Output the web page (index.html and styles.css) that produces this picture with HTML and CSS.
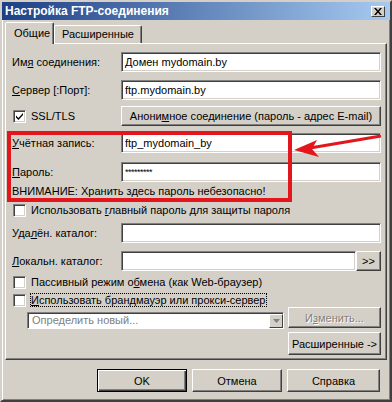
FILE: index.html
```html
<!DOCTYPE html>
<html lang="ru">
<head>
	<meta charset="utf-8"/>
	<title>Настройка FTP-соединения</title>
	<link rel="stylesheet" href="styles.css">
</head>
<body>
	<div class="window">
		<div class="titlebar">
			<span class="title">Настройка FTP-соединения</span>
			<span class="close">
				<svg width="8" height="7" viewBox="0 0 8 7"><path d="M0 0h2l2 2.5L6 0h2L5 3.5 8 7H6L4 4.5 2 7H0l3-3.5z" fill="#000"/></svg>
			</span>
		</div>

		<div class="tabs">
			<span class="tab active">Общие</span>
			<span class="tab">Расширенные</span>
		</div>

		<div class="panel">
			<div class="row first">
				<span class="lbl">Им<u>я</u> соединения:</span>
				<span class="field">Домен mydomain.by</span>
			</div>
			<div class="row">
				<span class="lbl"><u>С</u>ервер [:Порт]:</span>
				<span class="field">ftp.mydomain.by</span>
			</div>
			<div class="row gap6">
				<span class="lbl check-row"><span class="check"><svg width="7" height="7" viewBox="0 0 7 7"><path d="M0 2.5l2.5 2.5L7 0v2L2.5 7 0 4.5z" fill="#000"/></svg></span><span>SSL/TLS</span></span>
				<span class="btn fill"><span>Анони<u>м</u>ное соединение (пароль - адрес E-mail)</span></span>
			</div>
			<div class="row gap7">
				<span class="lbl"><u>У</u>чётная запись:</span>
				<span class="field">ftp_mydomain_by</span>
			</div>
			<div class="row gap9">
				<span class="lbl"><u>П</u>ароль:</span>
				<span class="field"><span class="stars">*********</span></span>
			</div>
			<div class="note">ВНИМАНИЕ: Хранить здесь пароль небезопасно!</div>
			<div class="check-row gap5">
				<span class="check"></span><span>Использовать <u>г</u>лавный пароль для защиты пароля</span>
			</div>
			<div class="row gap6">
				<span class="lbl">Уда<u>л</u>ён. каталог:</span>
				<span class="field"></span>
			</div>
			<div class="row">
				<span class="lbl"><u>Л</u>окальн. каталог:</span>
				<span class="field"></span>
				<span class="btn small">&gt;&gt;</span>
			</div>
			<div class="check-row gap4">
				<span class="check"></span><span>Пассивный режим о<u>б</u>мена (как Web-браузер)</span>
			</div>
			<div class="check-row gap4">
				<span class="check"></span><span class="focus"><u>И</u>спользовать брандмауэр или прокси-сервер</span>
			</div>
			<div class="proxy">
				<div class="combo">
					<span class="combo-text">Определить новый...</span>
					<span class="combo-arrow">
						<svg width="7" height="4" viewBox="0 0 7 4"><path d="M0 0h7L3.5 4z" fill="#808080"/></svg>
					</span>
				</div>
				<div class="proxy-buttons">
					<span class="btn disabled"><span>И<u>з</u>менить...</span></span>
					<span class="btn tall">Расширенные -&gt;</span>
				</div>
			</div>
		</div>

		<div class="actions">
			<span class="btn default">OK</span>
			<span class="btn">Отмена</span>
			<span class="btn help">Справка</span>
		</div>

		<div class="mark"></div>
		<svg class="arrow" width="392" height="402" viewBox="0 0 392 402">
			<line x1="381" y1="136" x2="310" y2="148" stroke="#e3161d" stroke-width="3"/>
			<path d="M294 150 L317 140 L312 149 L319 157 Z" fill="#e3161d"/>
		</svg>
	</div>
</body>
</html>
```

FILE: styles.css
```css
body {
	margin: 0;
	font-family: "Liberation Sans", Arial, sans-serif;
	font-size: 11px;
	color: #000;
	background: #d4d0c8;
}

.window {
	position: relative;
	width: 392px;
	height: 402px;
	box-sizing: border-box;
	background: #d4d0c8;
	border: 2px solid;
	border-color: #d4d0c8 #404040 #404040 #d4d0c8;
	box-shadow: inset 1px 1px #fff, inset -1px -1px #808080;
}

/* title bar */
.titlebar {
	display: flex;
	align-items: center;
	height: 18px;
	padding: 0 3px;
	background: linear-gradient(to right, #1d3f85, #a6caf0);
}

.title {
	color: #fff;
	font-weight: bold;
	font-size: 12px;
}

.close {
	display: flex;
	align-items: center;
	justify-content: center;
	width: 14px;
	height: 11px;
	margin-left: auto;
	margin-right: 2px;
	box-sizing: border-box;
	background: #d4d0c8;
	border: 1px solid;
	border-color: #fff #404040 #404040 #fff;
}

/* tabs */
.tabs {
	display: flex;
	align-items: flex-end;
	height: 21px;
	margin-top: 2px;
	padding-left: 3px;
}

.tab {
	position: relative;
	height: 18px;
	line-height: 17px;
	padding: 0 7px;
	box-sizing: border-box;
	border: 1px solid;
	border-bottom: none;
	border-color: #fff #404040 transparent #fff;
	border-radius: 2px 2px 0 0;
	box-shadow: inset -1px 0 #808080;
}

.tab.active {
	z-index: 1;
	height: 22px;
	line-height: 20px;
	width: 49px;
	margin-bottom: -1px;
	padding: 0 0 0 8px;
	background: #d4d0c8;
}

/* tab page */
.panel {
	margin: 0 3px;
	padding: 8px 5px 4px 6px;
	border: 1px solid;
	border-color: #fff #404040 #404040 #fff;
	box-shadow: inset -1px -1px #808080;
}

.row {
	display: flex;
	align-items: center;
	height: 20px;
	margin-top: 8px;
}

.row.first { margin-top: 0; }
.gap4 { margin-top: 4px; }
.gap5 { margin-top: 5px; }
.row.gap6 { margin-top: 6px; }
.row.gap7 { margin-top: 7px; }
.row.gap9 { margin-top: 9px; }

.lbl {
	flex: none;
	width: 109px;
}

.field {
	flex: 1;
	height: 20px;
	line-height: 18px;
	padding: 0 3px;
	box-sizing: border-box;
	background: #fff;
	border: 1px solid;
	border-color: #808080 #fff #fff #808080;
	box-shadow: inset 1px 1px #404040, inset -1px -1px #d4d0c8;
	white-space: nowrap;
	overflow: hidden;
}

.stars {
	font-size: 9px;
	vertical-align: top;
	letter-spacing: -0.5px;
}

.note {
	height: 14px;
	line-height: 14px;
	margin-top: 2px;
}

.check-row {
	display: flex;
	align-items: center;
	height: 14px;
	white-space: nowrap;
}

.check {
	display: flex;
	align-items: center;
	justify-content: center;
	flex: none;
	width: 13px;
	height: 13px;
	margin: 0 5px 0 1px;
	box-sizing: border-box;
	background: #fff;
	border: 1px solid;
	border-color: #808080 #fff #fff #808080;
	box-shadow: inset 1px 1px #404040, inset -1px -1px #d4d0c8;
}

.focus {
	outline: 1px dotted #000;
	outline-offset: 0;
}

/* buttons */
.btn {
	display: flex;
	align-items: center;
	justify-content: center;
	box-sizing: border-box;
	height: 20px;
	background: #d4d0c8;
	border: 1px solid;
	border-color: #fff #404040 #404040 #fff;
	box-shadow: inset -1px -1px #808080;
	white-space: nowrap;
}

.btn.fill { flex: 1; }

.btn.small {
	flex: none;
	width: 25px;
}

.btn.disabled {
	height: 21px;
	color: #808080;
	text-shadow: 1px 1px #fff;
}

.btn.tall {
	height: 23px;
	margin-top: 4px;
}

/* proxy block */
.proxy {
	display: grid;
	grid-template-columns: 1fr 93px;
	column-gap: 4px;
	padding-left: 15px;
}

.combo {
	display: flex;
	align-items: stretch;
	height: 17px;
	margin-top: 5px;
	box-sizing: border-box;
	background: #fff;
	border: 1px solid;
	border-color: #808080 #fff #fff #808080;
	box-shadow: inset 1px 1px #404040;
}

.combo-text {
	flex: 1;
	padding: 0 4px;
	line-height: 15px;
	color: #808080;
}

.combo-arrow {
	display: flex;
	align-items: center;
	justify-content: center;
	width: 14px;
	margin: 1px 0 0;
	box-sizing: border-box;
	background: #d4d0c8;
	border: 1px solid;
	border-color: #fff #404040 #404040 #fff;
}

.proxy-buttons {
	display: flex;
	flex-direction: column;
}

/* dialog buttons */
.actions {
	display: flex;
	justify-content: flex-end;
	gap: 5px;
	margin: 9px 10px 0 0;
}

.actions .btn {
	width: 90px;
	height: 23px;
}

.actions .btn.help { width: 93px; }

.actions .btn.default {
	border-color: #000;
	box-shadow: inset 1px 1px #fff, inset -1px -1px #404040, inset -2px -2px #808080;
}

/* annotation overlay */
.mark {
	position: absolute;
	left: 5px;
	top: 129px;
	width: 285px;
	height: 71px;
	box-sizing: border-box;
	border: 4px solid #e3161d;
	pointer-events: none;
}

.arrow {
	position: absolute;
	left: -2px;
	top: -2px;
	pointer-events: none;
}
```
